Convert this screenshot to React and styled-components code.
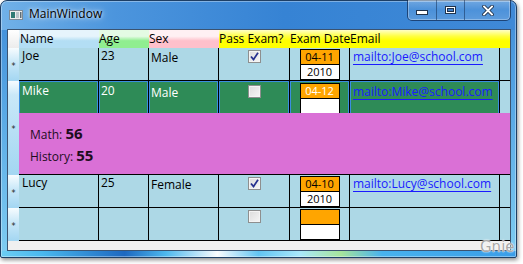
import React from "react";
import styled, { createGlobalStyle, css } from "styled-components";

const GlobalStyle = createGlobalStyle`
  html, body {
    margin: 0;
    padding: 0;
    background: #ffffff;
  }
  body {
    font-family: "Open Sans", "Noto Sans", sans-serif;
    font-size: 12px;
  }
`;

const students = [
  { name: "Joe", age: "23", sex: "Male", pass: true, date: "04-11", year: "2010", email: "mailto:Joe@school.com" },
  {
    name: "Mike", age: "20", sex: "Male", pass: false, date: "04-12", year: "",
    email: "mailto:Mike@school.com", selected: true, details: { math: 56, history: 55 },
  },
  { name: "Lucy", age: "25", sex: "Female", pass: true, date: "04-10", year: "2010", email: "mailto:Lucy@school.com" },
  { name: "", age: "", sex: "", pass: false, date: "", year: "", email: "" },
];

const Screen = styled.div`
  position: relative;
  width: 523px;
  height: 264px;
  overflow: hidden;
  background: #ffffff;
`;

const Window = styled.div`
  width: 517px;
  height: 258px;
  box-sizing: border-box;
  border: 1px solid #1d3f66;
  border-radius: 7px 7px 2px 2px;
  padding: 0 5px 0 6px;
  display: flex;
  flex-direction: column;
  background:
    linear-gradient(to right, #6ccdf4 0%, #4ab8ee 8%, #1d68c0 24%, #4db8ee 32%, #fafdff 42%, #62c4f2 50%, #a9e8fb 58%, #a6e59c 66%, #48b2ee 74%, #3a9de8 100%) left bottom / 100% 6px no-repeat,
    linear-gradient(to right, #71b1e8 0%, #4c95dd 22%, #3683d4 55%, #3f89d7 100%) left top / 100% 29px no-repeat,
    linear-gradient(to bottom, #3f8bd8 0%, #5aaae6 45%, #7fcdf2 100%);
  box-shadow: 1px 2px 4px rgba(0, 0, 0, 0.45), inset 0 0 0 1px rgba(255, 255, 255, 0.35);
`;

const TitleBar = styled.div`
  height: 28px;
  display: flex;
  align-items: flex-start;
  padding-left: 2px;
`;

const TitleText = styled.span`
  margin: 5px 0 0 6px;
  line-height: 16px;
  font-size: 12px;
  color: #000;
  text-shadow: 0 0 6px rgba(255, 255, 255, 0.9), 0 0 3px rgba(255, 255, 255, 0.7);
`;

const CaptionGroup = styled.div`
  margin: -1px 0 0 auto;
  height: 20px;
  display: flex;
  border: 1px solid rgba(16, 40, 80, 0.7);
  border-top: none;
  border-radius: 0 0 5px 5px;
  overflow: hidden;
  box-shadow: inset 0 0 0 1px rgba(255, 255, 255, 0.3);
`;

const CaptionButton = styled.div`
  width: ${(p) => p.$w}px;
  display: flex;
  align-items: center;
  justify-content: center;
  background: linear-gradient(rgba(255, 255, 255, 0.28), rgba(255, 255, 255, 0.08) 50%, rgba(255, 255, 255, 0.16));
  & + & {
    border-left: 1px solid rgba(20, 50, 90, 0.55);
  }
`;

const Client = styled.div`
  height: 222px;
  box-sizing: border-box;
  border: 1px solid #3b5370;
  background: #f0f0f0;
  display: flex;
  flex-direction: column;
  color: #000;
`;

const HeaderRow = styled.div`
  display: flex;
  height: 18px;
  line-height: 18px;
  white-space: nowrap;
`;

const HeaderCorner = styled.div`
  width: 11px;
  background: linear-gradient(#ffffff, #ececec);
`;

const HeaderCell = styled.div`
  width: ${(p) => p.$w}px;
  ${(p) => p.$grow && css`flex: 1;`}
  padding-left: ${(p) => p.$pad || 0}px;
  box-sizing: border-box;
  background: linear-gradient(${(p) => p.$light} 0%, ${(p) => p.$light} 35%, ${(p) => p.$color} 60%, ${(p) => p.$color} 100%);
`;

const YellowHeader = styled.div`
  flex: 1;
  display: flex;
  background: linear-gradient(#ffffc8 0%, #ffff40 35%, #ffff00 60%, #ffff00 100%);
`;

const HeaderLabel = styled.span`
  width: ${(p) => p.$w}px;
  overflow: visible;
`;

const GridRow = styled.div`
  display: flex;
`;

const RowHeader = styled.div`
  width: 11px;
  display: flex;
  align-items: center;
  justify-content: center;
  background: linear-gradient(#f7fcff 0px, #c9e8f8 14px, #a3d6f2 100%);
`;

const Star = styled.span`
  font-family: "DejaVu Sans", sans-serif;
  font-size: 8px;
  line-height: 8px;
  margin-top: 4px;
  color: #222;
`;

const RowBody = styled.div`
  width: 491px;
  display: flex;
  flex-direction: column;
`;

const Cells = styled.div`
  display: grid;
  grid-template-columns: 80px 50px 70px 71px 60px 150px 10px;
  height: ${(p) => (p.$selected ? 32 : 33)}px;
`;

const Cell = styled.div`
  box-sizing: border-box;
  border-right: 1px solid #000;
  border-bottom: 1px solid #000;
  background: #add8e6;
  padding: ${(p) => p.$top || 0}px 0 0 ${(p) => p.$left || 0}px;
  line-height: 16px;
  white-space: nowrap;
  ${(p) => p.$center && css`
    display: flex;
    justify-content: center;
    align-items: flex-start;
  `}
  ${(p) => p.$selected && css`
    background: #2e8b57;
    color: #ffffff;
    border-bottom: none;
    padding-top: ${(p.$top || 0) + 2}px;
    box-shadow: inset 0 0 0 1px #3b8de0;
  `}
`;

const Filler = styled.div`
  box-sizing: border-box;
  background: #add8e6;
  border-bottom: ${(p) => (p.$selected ? "none" : "1px solid #000")};
`;

const CheckBox = styled.span`
  width: 13px;
  height: 13px;
  box-sizing: border-box;
  border: 1px solid #8e8f8f;
  background: linear-gradient(135deg, #dcdcdc, #f6f6f6);
  box-shadow: inset 0 0 0 1px #f4f4f4;
  display: flex;
  align-items: center;
  justify-content: center;
`;

const DateBox = styled.div`
  width: 40px;
  margin-top: ${(p) => (p.$selected ? 0 : 1)}px;
  box-sizing: border-box;
  border: 1px solid #000;
  display: flex;
  flex-direction: column;
`;

const DatePart = styled.div`
  height: 14px;
  line-height: 14px;
  font-size: 11px;
  text-align: center;
  background: ${(p) => (p.$top ? "#ffa500" : "#ffffff")};
  color: ${(p) => (p.$light ? "#ffffff" : "#000000")};
  & + & {
    border-top: 1px solid #000;
  }
`;

const Link = styled.span`
  color: #1a1aff;
  text-decoration: underline;
  text-underline-offset: 3px;
`;

const Details = styled.div`
  height: 62px;
  box-sizing: border-box;
  border-bottom: 1px solid #000;
  background: #da70d6;
  padding: 10px 0 0 11px;
  color: #1e0d1e;
`;

const DetailLine = styled.div`
  line-height: 20px;
`;

const Score = styled.b`
  font-size: 15px;
`;

const BottomSpace = styled.div`
  flex: 1;
  background: #f0f0f0;
`;

const Watermark = styled.span`
  position: absolute;
  left: 480px;
  top: 238px;
  font-family: "DejaVu Sans", sans-serif;
  font-size: 15px;
  color: #a8a8a8;
  text-shadow: 0 0 1px #fff, 0 0 2px #fff;
`;

function AppIcon() {
  return (
    <svg width="14" height="10" viewBox="0 0 14 10" style={{ marginTop: 9 }}>
      <rect x="0.5" y="0.5" width="13" height="9" fill="#ececec" stroke="#7d8a96" />
      <rect x="2" y="2" width="4" height="6" fill="#2f7a73" />
      <rect x="7" y="2" width="3" height="6" fill="#b9c4c9" />
      <rect x="11" y="2" width="1.5" height="6" fill="#5d6d78" />
    </svg>
  );
}

function CheckMark() {
  return (
    <svg width="9" height="9" viewBox="0 0 9 9">
      <path d="M1 4.5 L3.5 7.5 L8 0.8" fill="none" stroke="#26318f" strokeWidth="1.8" />
    </svg>
  );
}

function Student({ s }) {
  const sel = !!s.selected;
  return (
    <GridRow>
      <RowHeader>
        <Star>*</Star>
      </RowHeader>
      <RowBody>
        <Cells $selected={sel}>
          <Cell $left={3} $selected={sel}>{s.name}</Cell>
          <Cell $left={2} $selected={sel}>{s.age}</Cell>
          <Cell $left={2} $top={2} $selected={sel}>{s.sex}</Cell>
          <Cell $center $top={2} $selected={sel}>
            <CheckBox>{s.pass && <CheckMark />}</CheckBox>
          </Cell>
          <Cell $center $selected={sel}>
            <DateBox $selected={sel}>
              <DatePart $top $light={sel}>{s.date}</DatePart>
              <DatePart>{s.year}</DatePart>
            </DateBox>
          </Cell>
          <Cell $left={3} $top={1} $selected={sel}>
            {s.email && <Link>{s.email}</Link>}
          </Cell>
          <Filler $selected={sel} />
        </Cells>
        {s.details && (
          <Details>
            <DetailLine>
              Math: <Score>{s.details.math}</Score>
            </DetailLine>
            <DetailLine>
              History: <Score>{s.details.history}</Score>
            </DetailLine>
          </Details>
        )}
      </RowBody>
    </GridRow>
  );
}

export default function App() {
  return (
    <Screen>
      <GlobalStyle />
      <Window>
        <TitleBar>
          <AppIcon />
          <TitleText>MainWindow</TitleText>
          <CaptionGroup>
            <CaptionButton $w={28}>
              <svg width="12" height="5" viewBox="0 0 12 5" style={{ marginTop: 5 }}>
                <rect x="0.5" y="0.5" width="11" height="4" fill="#fff" stroke="#1f324c" />
              </svg>
            </CaptionButton>
            <CaptionButton $w={27}>
              <svg width="11" height="8" viewBox="0 0 11 8">
                <rect x="0.5" y="0.5" width="10" height="7" fill="#fff" stroke="#1f324c" />
                <rect x="2.5" y="2.5" width="6" height="3" fill="#3f7ec9" stroke="#1f324c" />
              </svg>
            </CaptionButton>
            <CaptionButton $w={45}>
              <svg width="12" height="11" viewBox="0 0 12 11">
                <path d="M2 1.5 L10 9.5 M10 1.5 L2 9.5" stroke="#1f324c" strokeWidth="3.6" strokeLinecap="square" />
                <path d="M2 1.5 L10 9.5 M10 1.5 L2 9.5" stroke="#fff" strokeWidth="1.8" strokeLinecap="square" />
              </svg>
            </CaptionButton>
          </CaptionGroup>
        </TitleBar>
        <Client>
          <HeaderRow>
            <HeaderCorner />
            <HeaderCell $w={80} $pad={1} $light="#e6f4fc" $color="#b3def4">Name</HeaderCell>
            <HeaderCell $w={50} $light="#e4fbe4" $color="#90ee90">Age</HeaderCell>
            <HeaderCell $w={70} $light="#fff0f3" $color="#ffc0cb">Sex</HeaderCell>
            <YellowHeader>
              <HeaderLabel $w={71}>Pass Exam?</HeaderLabel>
              <HeaderLabel $w={60}>Exam Date</HeaderLabel>
              <HeaderLabel $w={150}>Email</HeaderLabel>
            </YellowHeader>
          </HeaderRow>
          {students.map((s, i) => (
            <Student key={i} s={s} />
          ))}
          <BottomSpace />
        </Client>
      </Window>
      <Watermark>Gnie</Watermark>
    </Screen>
  );
}
